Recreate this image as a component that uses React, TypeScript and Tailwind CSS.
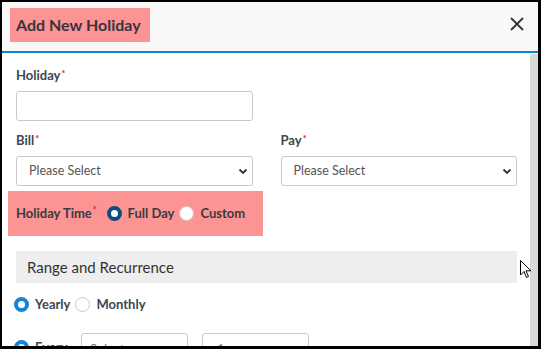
import React from 'react'

const font = { fontFamily: 'Lato, "Open Sans", sans-serif' }

function Req() {
    return <span className="text-[#e0202a] text-[9px] align-top relative -top-[1px] ml-[1px]">*</span>
}

function Radio({ checked, color }: { checked?: boolean; color?: string }) {
    if (checked) {
        return (
            <span
                className={`inline-block w-[15px] h-[15px] rounded-full border-[4px] bg-white ${color === 'navy' ? 'border-[#0d4d7e]' : 'border-[#1584d6]'}`}
            />
        )
    }
    return <span className="inline-block w-[15px] h-[15px] rounded-full border border-[#c8c8c8] bg-white" />
}

function Chevron() {
    return (
        <svg width="10" height="10" viewBox="0 0 10 10" className="absolute right-[4px] top-1/2 -translate-y-1/2">
            <path d="M1.5 3.5 L5 7 L8.5 3.5" fill="none" stroke="#333" strokeWidth="1.8" />
        </svg>
    )
}

function SelectBox() {
    return (
        <div className="relative h-[30px] border border-[#c9c9c9] rounded-[3px] bg-white flex items-center pl-[12px] text-[12.5px] text-[#555]">
            Please Select
            <Chevron />
        </div>
    )
}

export default function App() {
    return (
        <div className="relative w-[541px] h-[349px] bg-black pt-[2px] pl-[2px] pr-[3px] pb-[3px]" style={font}>
            <div className="w-full h-full bg-white flex flex-col overflow-hidden">
                {/* header */}
                <div className="h-[51px] shrink-0 bg-[#f8f8f8] border-b-2 border-[#0a85d1] flex items-start justify-between">
                    <div className="mt-[6px] ml-[8px] h-[34px] w-[140px] bg-[#fc9494] flex items-center pl-[6px] text-[16px] font-bold text-[#3a3340]">
                        Add New Holiday
                    </div>
                    <svg width="14" height="14" viewBox="0 0 14 14" className="mt-[15px] mr-[14px]">
                        <path d="M1 1 L13 13 M13 1 L1 13" stroke="#333" strokeWidth="1.8" />
                    </svg>
                </div>

                <div className="flex flex-1 min-h-0">
                    <div className="flex-1 pl-[14px] pr-[13px] pt-[14px]">
                        <div className="text-[13px] font-bold text-[#3b4751] leading-[16px]">
                            Holiday<Req />
                        </div>
                        <div className="mt-[8px] w-[237px] h-[30px] border border-[#c9c9c9] rounded-[3px]" />

                        <div className="grid grid-cols-2 gap-[28px] mt-[11px]">
                            <div>
                                <div className="text-[13px] font-bold text-[#3b4751] leading-[16px]">
                                    Bill<Req />
                                </div>
                                <div className="mt-[8px]">
                                    <SelectBox />
                                </div>
                            </div>
                            <div>
                                <div className="text-[13px] font-bold text-[#3b4751] leading-[16px]">
                                    Pay<Req />
                                </div>
                                <div className="mt-[8px]">
                                    <SelectBox />
                                </div>
                            </div>
                        </div>

                        {/* holiday time */}
                        <div className="-ml-[8px] mt-[5px] w-[255px] h-[45px] bg-[#fc9494] flex items-center pl-[8px] text-[13px] font-bold text-[#3b3a40]">
                            <span>Holiday Time<Req /></span>
                            <span className="ml-[10px] flex items-center gap-[6px]">
                                <Radio checked color="navy" />
                                Full Day
                            </span>
                            <span className="ml-[5px] flex items-center gap-[6px]">
                                <Radio />
                                Custom
                            </span>
                        </div>

                        <div className="mt-[15px] h-[32px] bg-[#eeeeee] flex items-center pl-[11px] text-[15px] text-[#333]">
                            Range and Recurrence
                        </div>

                        <div className="mt-[12px] -ml-[2px] flex items-center text-[13px] font-bold text-[#3b4751]">
                            <span className="flex items-center gap-[6px]">
                                <Radio checked />
                                Yearly
                            </span>
                            <span className="ml-[5px] flex items-center gap-[6px]">
                                <Radio />
                                Monthly
                            </span>
                        </div>

                        <div className="mt-[18px] -ml-[2px] flex items-center text-[13px] font-bold text-[#3b4751]">
                            <span className="flex items-center gap-[6px] w-[67px]">
                                <Radio checked />
                                Every
                            </span>
                            <div className="w-[107px] h-[30px] border border-[#c9c9c9] rounded-[3px] pl-[8px] pt-[6px] font-normal text-[#777]">
                                Select
                            </div>
                            <div className="ml-[14px] w-[107px] h-[30px] border border-[#c9c9c9] rounded-[3px] pl-[14px] pt-[6px] font-normal text-[#777]">
                                1
                            </div>
                        </div>
                    </div>
                    <div className="w-[8px] shrink-0 bg-[#d9d9d9] mt-[1px] rounded-tl-[2px]" />
                </div>
            </div>

            {/* mouse pointer */}
            <svg width="12" height="19" viewBox="0 0 12 19" className="absolute left-[520px] top-[260px]">
                <path d="M0.5 0.5 L0.5 15 L4 11.5 L6.5 17.5 L8.5 16.5 L6 10.8 L11 10.8 Z" fill="#fff" stroke="#000" strokeWidth="1" strokeLinejoin="round" />
            </svg>
        </div>
    )
}
